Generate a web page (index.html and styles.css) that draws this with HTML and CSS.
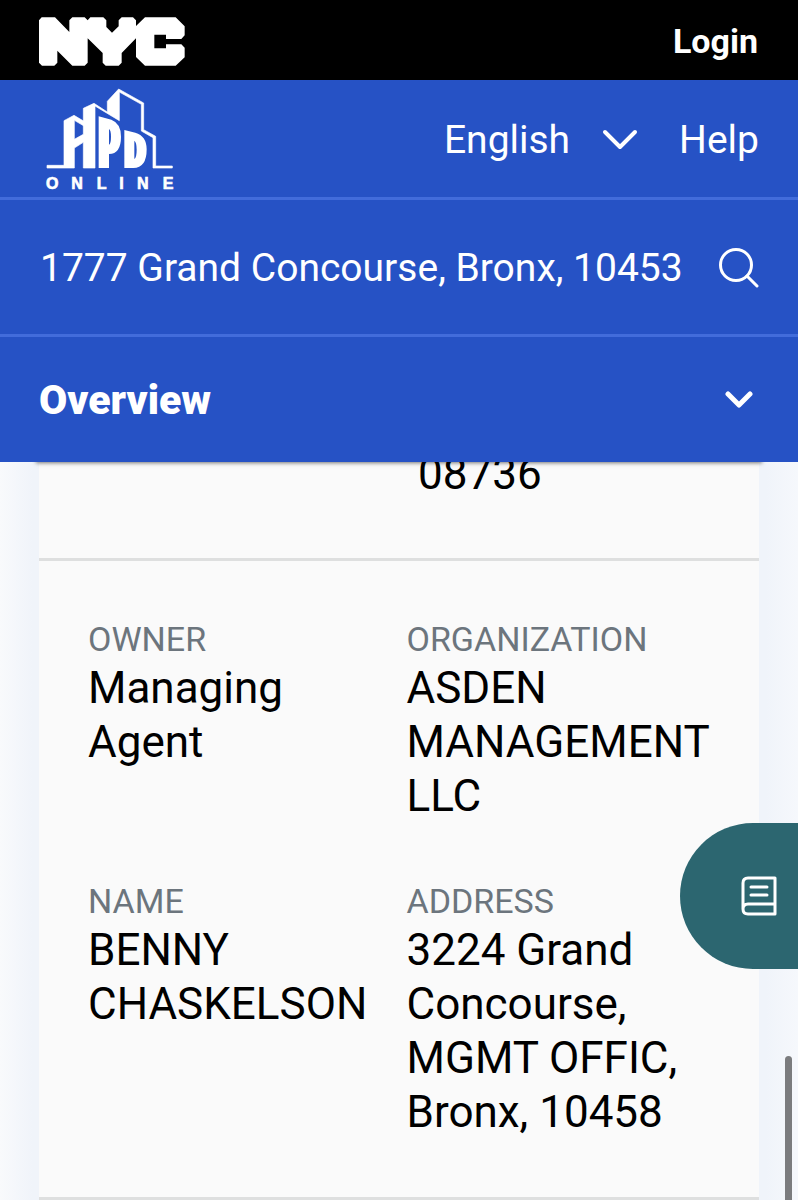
FILE: index.html
```html
<!DOCTYPE html>
<html lang="en">
<head>
<meta charset="utf-8">
<meta name="viewport" content="width=device-width, initial-scale=1">
<title>HPD Online</title>
<link rel="stylesheet" href="styles.css">
</head>
<body>
<header class="header">
  <div class="city-bar">
    <a class="link" href="#" aria-label="NYC">
      <svg class="nyc-logo" viewBox="58 50 438 147" aria-hidden="true"><path fill="#fff" fill-rule="evenodd" d="M66 51H106L149 95V60L158 51H195L204 60L212 51H251L260 60V80L277 97L297 78V60L306 51H340L349 60V77L376 51H468L495 78V105L485 116H439V103H404V144H439V132H485L495 142V171L468 196H376L349 170V114L306 158V187L297 196H258L249 187V158L204 114V187L195 196H158L113 151V187L104 196H67L58 187V60Z"/></svg>
    </a>
    <a class="link login" href="#">Login</a>
  </div>
  <div class="brand-bar">
    <a class="link" href="#" aria-label="HPD Online">
      <svg class="hpd-logo" viewBox="48 24 384 309" aria-hidden="true">
        <g fill="#fff">
          <path stroke="#fff" stroke-width="2" d="M102 122L132 106L162 124V138L133 121V178L160 163V85L192 70L232 96V64L266 27L341 69V149L377 169V258H427V264H369V173L334 153V73L268 36V122L195 78V264H160V187L133 204V264H51V256H102Z"/>
          <path fill-rule="evenodd" d="M206 109L244 119Q273 130 273 170Q273 221 237 222V264H206ZM237 147V194Q243 191 243 170Q243 151 237 147Z"/>
          <path fill-rule="evenodd" d="M283 150L316 158Q350 168 350 208Q350 264 310 264H283ZM313 182V237Q320 233 320 209Q320 187 313 182Z"/>
        </g>
        <text class="logo-text" y="328" x="48 124 200 268 321 398">ONLINE</text>
      </svg>
    </a>
    <nav class="nav">
      <button class="button language" type="button">English
        <svg class="chevron" viewBox="0 0 36 22" aria-hidden="true"><path d="M3 3L18 18L33 3"/></svg>
      </button>
      <a class="link" href="#">Help</a>
    </nav>
  </div>
  <form class="search-bar">
    <input class="search-input" type="text" aria-label="Search address" value="1777 Grand Concourse, Bronx, 10453">
    <button class="button" type="button" aria-label="Search">
      <svg class="search-icon" viewBox="0 0 40 40" aria-hidden="true"><circle cx="17" cy="17" r="15.5"/><path d="M28 28L38 38"/></svg>
    </button>
  </form>
  <button class="button overview" type="button">Overview
    <svg class="chevron-small" viewBox="0 0 28 18" aria-hidden="true"><path d="M3 3L14 14L25 3"/></svg>
  </button>
</header>
<main class="card">
  <section class="record previous">
    <p class="value">08736</p>
  </section>
  <section class="record">
    <dl class="fields">
      <div><dt class="label">OWNER</dt><dd class="value">Managing Agent</dd></div>
      <div><dt class="label">ORGANIZATION</dt><dd class="value">ASDEN MANAGEMENT LLC</dd></div>
      <div><dt class="label">NAME</dt><dd class="value">BENNY CHASKELSON</dd></div>
      <div><dt class="label">ADDRESS</dt><dd class="value">3224 Grand Concourse, MGMT OFFIC, Bronx, 10458</dd></div>
    </dl>
  </section>
</main>
<button class="button guide" type="button" aria-label="Glossary">
  <svg class="book-icon" viewBox="0 0 36 40" aria-hidden="true"><path d="M7 2H34V38H7Q2 38 2 33V7Q2 2 7 2ZM2 33Q2 28 7 28H34M10 11H26M10 19H26"/></svg>
</button>
<div class="scroll-thumb"></div>
</body>
</html>
```

FILE: styles.css
```css
* { box-sizing: border-box; }
body {
  margin: 0;
  font-family: Roboto, "Liberation Sans", sans-serif;
  color: #000;
  background: linear-gradient(to right, #f9fafc, #f0f4fa 32px, #f0f4fa calc(100% - 32px), #f6f8fc);
  height: 100vh;
  overflow: hidden;
}
.header {
  position: relative;
  z-index: 1;
  background: #2652c5;
  color: #fff;
  font-size: 39px;
}
.header::after {
  content: "";
  position: absolute;
  z-index: -1;
  inset: auto 36px 0;
  height: 16px;
  box-shadow: 0 1px 4px #0008;
}
.link { color: inherit; text-decoration: none; }
.link svg, .button svg { display: block; }
.button {
  padding: 0;
  border: 0;
  background: none;
  color: inherit;
  font: inherit;
}
.city-bar {
  display: flex;
  align-items: center;
  justify-content: space-between;
  height: 80px;
  padding: 2px 40px 0 39px;
  background: #000;
}
.nyc-logo { width: 146px; height: 49px; }
.login { font-size: 34px; font-weight: 700; }
.brand-bar {
  display: flex;
  align-items: center;
  justify-content: space-between;
  height: 120px;
  padding: 2px 39px 0 46px;
  border-bottom: 3px solid #426cdb;
}
.hpd-logo { width: 128px; height: 103px; overflow: visible; }
.logo-text {
  font: 700 48px "Liberation Sans", sans-serif;
  fill: #fff;
  stroke: #fff;
  stroke-width: 2;
}
.nav { display: flex; align-items: center; gap: 41px; }
.language { display: flex; align-items: center; gap: 32px; }
.chevron { width: 36px; height: 22px; }
.chevron-small { width: 28px; height: 18px; }
.chevron path, .chevron-small path {
  fill: none;
  stroke: #fff;
  stroke-width: 4;
  stroke-linecap: round;
  stroke-linejoin: round;
}
.chevron-small path { stroke-width: 5; }
.search-bar {
  display: flex;
  align-items: center;
  justify-content: space-between;
  gap: 16px;
  height: 137px;
  padding: 2px 39px 0 40px;
  border-bottom: 3px solid #426cdb;
}
.search-input {
  flex: 1;
  min-width: 0;
  padding: 0;
  border: 0;
  background: none;
  color: inherit;
  font: inherit;
}
.search-icon {
  width: 40px;
  height: 40px;
  fill: none;
  stroke: #fff;
  stroke-width: 3;
  stroke-linecap: round;
}
.overview {
  display: flex;
  align-items: center;
  justify-content: space-between;
  width: 100%;
  height: 125px;
  padding: 1px 45px 0 39px;
  background: #2652c5;
  font-size: 41px;
  font-weight: 900;
}
.card {
  margin: -15px 39px 0;
  background: #fafafa;
}
.record {
  padding: 58px 48px 58px 49px;
  border-bottom: 3px solid #dedfdf;
}
.previous { padding: 0 48px 57px 379px; }
.fields {
  display: grid;
  grid-template-columns: 1fr 1fr;
  column-gap: 14px;
  row-gap: 58px;
  margin: 0;
}
.label { margin-bottom: 2px; font-size: 34px; line-height: 40px; color: #6c757d; }
.value { margin: 0; font-size: 44px; line-height: 54px; }
.guide {
  position: fixed;
  z-index: 2;
  right: 0;
  top: 823px;
  display: flex;
  align-items: center;
  justify-content: flex-end;
  width: 118px;
  height: 146px;
  padding-right: 21px;
  border-radius: 73px 0 0 73px;
  background: #2c6670;
}
.book-icon {
  width: 36px;
  height: 40px;
  fill: none;
  stroke: #fff;
  stroke-width: 3;
  stroke-linecap: round;
  stroke-linejoin: round;
}
.scroll-thumb {
  position: fixed;
  z-index: 2;
  right: 6px;
  top: 1056px;
  bottom: -8px;
  width: 7px;
  border-radius: 4px;
  background: #7b7c7e;
}
```
